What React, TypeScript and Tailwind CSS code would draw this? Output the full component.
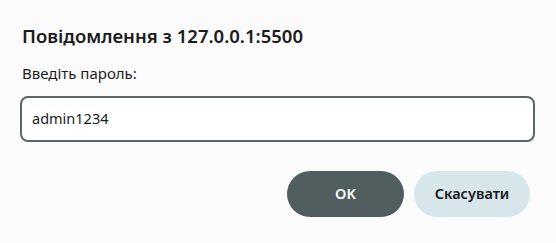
export default function App() {
  return (
    <div className="h-[243px] w-[556px] overflow-hidden bg-[#fbfbfb] font-['Noto_Sans','Open_Sans',sans-serif] text-[#1b1b1b]">
      <div className="px-[22px] pt-[22px]">
        <h1 className="text-[18.5px] font-semibold leading-[28px]">Повідомлення з 127.0.0.1:5500</h1>
        <p className="mt-[13px] text-[15px] leading-[20px]">Введіть пароль:</p>
        <div className="mt-[13px] mr-[-1px] ml-[-2px] flex h-[46px] items-center rounded-[8px] border-2 border-[#5b6668] bg-white pl-[10px]">
          <input
            className="w-full bg-transparent text-[14.5px] outline-none"
            defaultValue="admin1234"
          />
        </div>
        <div className="mt-[29px] flex justify-end gap-[10px] pr-[4px]">
          <button className="h-[46px] w-[117px] rounded-full bg-[#505e5f] text-[14.5px] font-semibold text-white">
            OK
          </button>
          <button className="h-[46px] w-[116px] rounded-full bg-[#d6e6eb] text-[14.5px] font-semibold text-[#1b1b1b]">
            Скасувати
          </button>
        </div>
      </div>
    </div>
  );
}
